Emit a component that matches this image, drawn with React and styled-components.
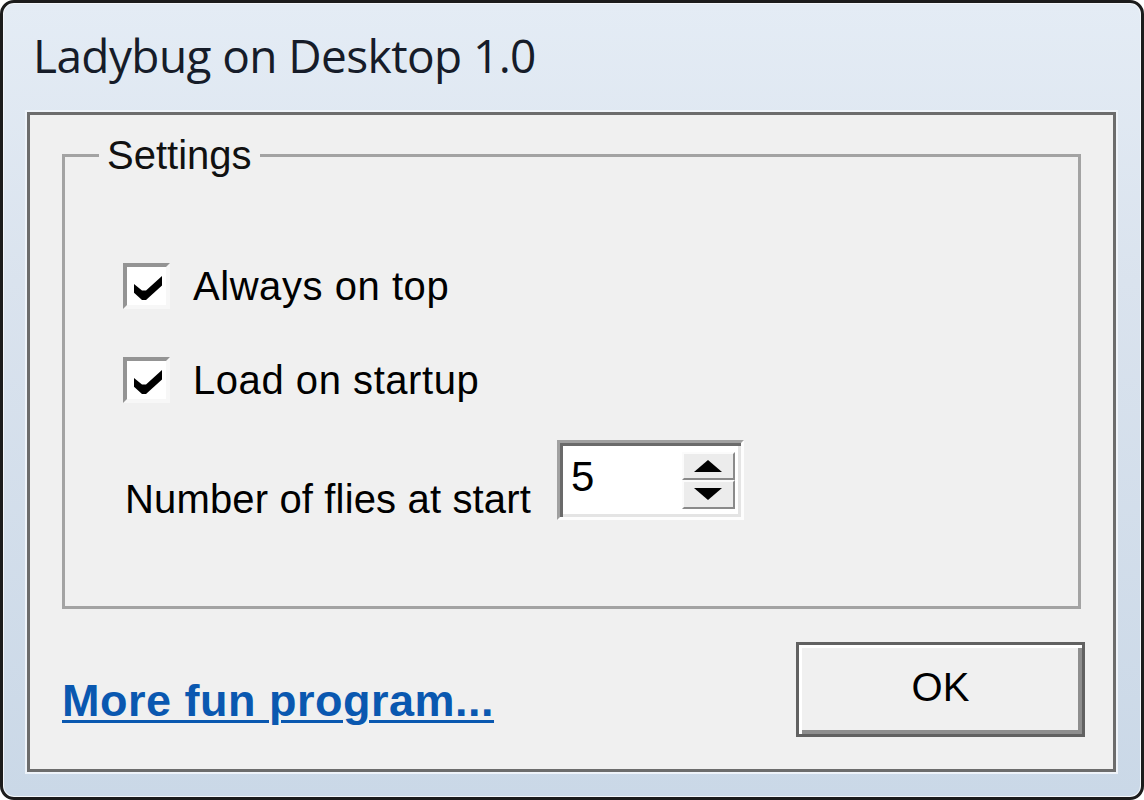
import React from 'react';
import styled, { createGlobalStyle } from 'styled-components';

const Global = createGlobalStyle`
  body {
    margin: 0;
    background: #ffffff;
  }
`;

const App = () => {
  return (
    <>
      <Global />
      <Window>
        <TitleBar>
          <Title>Ladybug on Desktop 1.0</Title>
        </TitleBar>

        <Client>
          <Group>
            <Legend>Settings</Legend>
            <Options>
              <CheckList>
                <CheckRow>
                  <Box><Tick /></Box>
                  <Label>Always on top</Label>
                </CheckRow>
                <CheckRow>
                  <Box><Tick /></Box>
                  <Label>Load on startup</Label>
                </CheckRow>
              </CheckList>

              <SpinRow>
                <SpinLabel>Number of flies at start</SpinLabel>
                <SpinBox>
                  <Value>5</Value>
                  <SpinButtons>
                    <SpinButton><Arrow dir="up" /></SpinButton>
                    <SpinButton><Arrow dir="down" /></SpinButton>
                  </SpinButtons>
                </SpinBox>
              </SpinRow>
            </Options>
          </Group>

          <Footer>
            <Link href="#">More fun program...</Link>
            <OkButton>OK</OkButton>
          </Footer>
        </Client>
      </Window>
    </>
  );
};

// classic 7x7 pixel check, drawn at 4x
const Tick = () => (
  <svg width="28" height="24" viewBox="0 0 7 6">
    <polygon points="0,2 2,3.6 3,3.6 7,0 7,2.4 3,6 2,6 0,4.2" fill="#000" />
  </svg>
);

export default App;

const Window = styled.div`
  width: 1144px;
  height: 800px;
  box-sizing: border-box;
  border: 3px solid #1c1c1c;
  border-radius: 14px;
  background: linear-gradient(to bottom, #e4ecf5 0%, #dae3ee 35%, #cad8e7 100%);
  box-shadow: inset 0 0 0 1px #f3f6fa;
  display: flex;
  flex-direction: column;
  overflow: hidden;
`;

const TitleBar = styled.div`
  height: 109px;
  flex-shrink: 0;
  box-sizing: border-box;
  padding: 29px 0 0 30px;
`;

const Title = styled.div`
  font-family: "Open Sans", "Noto Sans", sans-serif;
  font-size: 46px;
  line-height: 1;
  letter-spacing: -0.6px;
  color: #161c29;
`;

const Client = styled.div`
  flex: 1;
  margin: 0 25px 25px 24px;
  border: 3px solid #6c6c6c;
  box-shadow: 0 0 0 2px #eef3f9;
  background: #f0f0f0;
  padding: 0 28px 32px 32px;
  display: flex;
  flex-direction: column;
  font-family: "Liberation Sans", Arial, sans-serif;
  font-size: 40px;
  color: #000;
`;

const Group = styled.fieldset`
  box-sizing: border-box;
  height: 477px;
  margin: 17px 4px 0 0;
  padding: 85px 0 0 0;
  border: 3px solid #a3a3a3;
  min-width: 0;
`;

const Legend = styled.legend`
  margin-left: 34px;
  padding: 0 8px;
  line-height: 46px;
  color: #111;
`;

const Options = styled.div`
  display: flex;
  flex-direction: column;
  padding-left: 58px;
`;

const CheckList = styled.div`
  display: flex;
  flex-direction: column;
  gap: 48px;
`;

const CheckRow = styled.label`
  display: flex;
  align-items: center;
  gap: 23px;
  height: 46px;
  line-height: 46px;
`;

const Box = styled.span`
  box-sizing: border-box;
  width: 47px;
  height: 46px;
  background: #fff;
  border: 4px solid;
  border-color: #949494 #f7f7f7 #f7f7f7 #949494;
  display: flex;
  align-items: center;
  justify-content: center;
  padding: 4px 0 0 2px;
`;

const Label = styled.span`
  white-space: nowrap;
  letter-spacing: 0.55px;
`;

const SpinRow = styled.div`
  margin-top: 37px;
  display: flex;
  align-items: flex-end;
  gap: 26px;
  padding-left: 2px;
`;

const SpinLabel = styled.span`
  line-height: 46px;
  margin-bottom: -2px;
  letter-spacing: 0.15px;
  white-space: nowrap;
`;

const SpinBox = styled.div`
  box-sizing: border-box;
  width: 187px;
  height: 80px;
  background: #fff;
  border: 3px solid;
  border-color: #a0a0a0 #fdfdfd #fdfdfd #a0a0a0;
  box-shadow: inset 3px 3px 0 #6a6a6a, inset -3px -3px 0 #e4e4e4;
  display: flex;
  align-items: center;
  padding: 0 6px 6px 11px;
`;

const Value = styled.span`
  font-size: 42px;
  line-height: 1;
`;

const SpinButtons = styled.div`
  margin-left: auto;
  margin-top: 6px;
  width: 53px;
  height: 57px;
  display: flex;
  flex-direction: column;
`;

const SpinButton = styled.div`
  flex: 1;
  box-sizing: border-box;
  background: #ececec;
  border: 2px solid;
  border-color: #fbfbfb #8a8a8a #8a8a8a #fbfbfb;
  display: flex;
  align-items: center;
  justify-content: center;
`;

const Arrow = styled.span`
  width: 0;
  height: 0;
  border-left: 14px solid transparent;
  border-right: 14px solid transparent;
  ${props => props.dir === 'up'
    ? 'border-bottom: 12px solid #000;'
    : 'border-top: 12px solid #000;'}
`;

const Footer = styled.div`
  margin-top: 33px;
  display: flex;
  justify-content: space-between;
  align-items: flex-start;
`;

const Link = styled.a`
  margin-top: 36px;
  font-size: 45px;
  font-weight: 700;
  line-height: 1;
  letter-spacing: 0.5px;
  color: #0a58b0;
  text-decoration: underline;
  text-decoration-thickness: 3px;
  text-underline-offset: 4px;
`;

const OkButton = styled.button`
  box-sizing: border-box;
  width: 289px;
  height: 95px;
  background: #f0f0f0;
  border: 3px solid #616161;
  box-shadow: inset 3px 3px 0 #ffffff, inset -4px -4px 0 #8e8e8e;
  font-family: "Liberation Sans", Arial, sans-serif;
  font-size: 40px;
  color: #000;
  padding: 0 0 4px;
`;
